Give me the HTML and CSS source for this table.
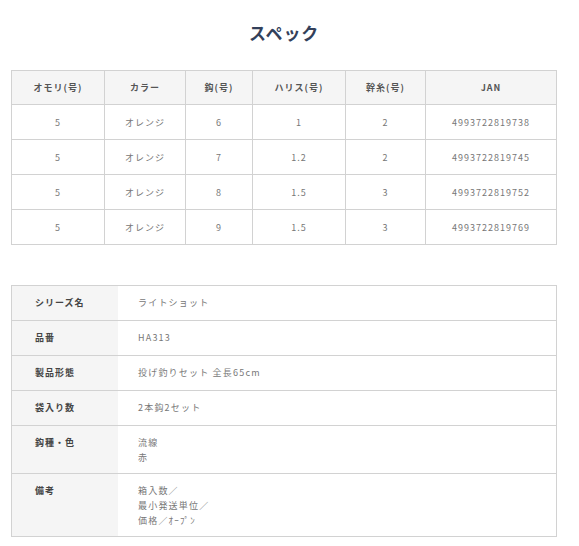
FILE: index.html
```html
<!DOCTYPE html>
<html lang="ja">
<head>
<meta charset="utf-8">
<link rel="stylesheet" href="styles.css">
</head>
<body>
<div class="page">
  <h2 class="title">スペック</h2>
  <table class="spec">
    <colgroup>
      <col style="width:93px"><col style="width:81px"><col style="width:67px"><col style="width:93px"><col style="width:80px"><col>
    </colgroup>
    <thead>
      <tr><th>オモリ(号)</th><th>カラー</th><th>鈎(号)</th><th>ハリス(号)</th><th>幹糸(号)</th><th>JAN</th></tr>
    </thead>
    <tbody>
      <tr><td>5</td><td>オレンジ</td><td>6</td><td>1</td><td>2</td><td>4993722819738</td></tr>
      <tr><td>5</td><td>オレンジ</td><td>7</td><td>1.2</td><td>2</td><td>4993722819745</td></tr>
      <tr><td>5</td><td>オレンジ</td><td>8</td><td>1.5</td><td>3</td><td>4993722819752</td></tr>
      <tr><td>5</td><td>オレンジ</td><td>9</td><td>1.5</td><td>3</td><td>4993722819769</td></tr>
    </tbody>
  </table>

  <div class="info">
    <div class="row"><div class="label">シリーズ名</div><div class="value">ライトショット</div></div>
    <div class="row"><div class="label">品番</div><div class="value">HA313</div></div>
    <div class="row"><div class="label">製品形態</div><div class="value">投げ釣りセット 全長65cm</div></div>
    <div class="row"><div class="label">袋入り数</div><div class="value">2本鈎2セット</div></div>
    <div class="row"><div class="label">鈎種・色</div><div class="value">流線<br>赤</div></div>
    <div class="row"><div class="label">備考</div><div class="value">箱入数／<br>最小発送単位／<br>価格／ｵｰﾌﾟﾝ</div></div>
  </div>
</div>
</body>
</html>
```

FILE: styles.css
```css
* { box-sizing: border-box; }
html, body { margin: 0; padding: 0; background: #fff; }
body {
  font-family: "Noto Sans CJK JP", "Noto Sans", sans-serif;
  color: #666;
}
.page {
  width: 579px;
  padding: 0 22px 0 11px;
}
.title {
  margin: 0;
  padding-top: 21px;
  height: 70px;
  line-height: 24px;
  text-align: center;
  font-size: 17px;
  font-weight: 700;
  letter-spacing: 0.8px;
  color: #33405a;
}
.spec {
  width: 546px;
  table-layout: fixed;
  border-collapse: collapse;
  border: 1px solid #d2d2d2;
}
.spec th, .spec td {
  border: 1px solid #d2d2d2;
  padding: 0;
  text-align: center;
  vertical-align: middle;
  font-size: 9px;
  letter-spacing: 1px;
  line-height: 15px;
}
.spec th {
  height: 34px;
  background: #f5f5f5;
  font-weight: 700;
  color: #555;
}
.spec td {
  height: 35px;
  color: #777;
}
.info {
  margin-top: 40px;
  width: 546px;
  border: 1px solid #d2d2d2;
  border-bottom: none;
}
.row {
  display: grid;
  grid-template-columns: 106px 1fr;
  border-bottom: 1px solid #d2d2d2;
  min-height: 35px;
}
.label {
  background: #f5f5f5;
  padding: 9px 0 8px 23px;
  font-size: 9px;
  line-height: 15px;
  letter-spacing: 1px;
  font-weight: 700;
  color: #444;
}
.value {
  padding: 9px 0 8px 20px;
  font-size: 9px;
  line-height: 15px;
  letter-spacing: 1.2px;
  color: #777;
}
```
